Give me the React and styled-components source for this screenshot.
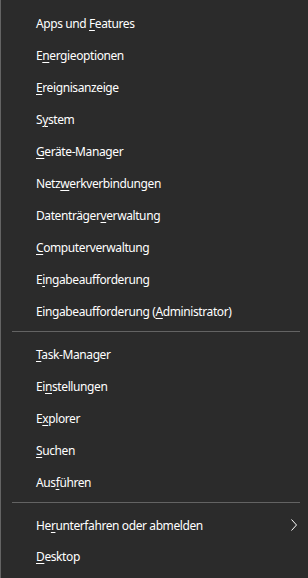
import React from 'react';
import styled, { createGlobalStyle } from 'styled-components';

const GlobalStyle = createGlobalStyle`
html, body {
  margin: 0;
  padding: 0;
  background: #2b2b2b;
}
`;

const Menu = styled.div`
width: 308px;
height: 578px;
box-sizing: border-box;
padding: 8px 0 5px 0;
background: #2b2b2b;
border-left: 1px solid #646464;
font-family: "Noto Sans", "Open Sans", sans-serif;
font-size: 12px;
letter-spacing: -0.4px;
color: #ffffff;
display: flex;
flex-direction: column;
`;

const Item = styled.div`
height: 32px;
display: flex;
align-items: center;
justify-content: space-between;
padding-left: 35px;
padding-right: 11px;
cursor: default;
`;

const Key = styled.span`
text-decoration: underline;
text-underline-offset: 2px;
text-decoration-thickness: 1px;
`;

const Separator = styled.div`
height: 1px;
margin: 4px 8px 6px 11px;
background: #636363;
`;

const Chevron = () => (
  <svg width="6" height="12" viewBox="0 0 6 12">
    <polyline points="0.5,0.5 5.5,6 0.5,11.5" fill="none" stroke="#ffffff" strokeWidth="1" />
  </svg>
);

const Label = ({ text, k }) => (
  <span>
    {text.slice(0, k)}
    <Key>{text[k]}</Key>
    {text.slice(k + 1)}
  </span>
);

const groups = [
  [
    ['Apps und Features', 9],
    ['Energieoptionen', 1],
    ['Ereignisanzeige', 0],
    ['System', 1],
    ['Geräte-Manager', 0],
    ['Netzwerkverbindungen', 4],
    ['Datenträgerverwaltung', 11],
    ['Computerverwaltung', 0],
    ['Eingabeaufforderung', 1],
    ['Eingabeaufforderung (Administrator)', 21],
  ],
  [
    ['Task-Manager', 0],
    ['Einstellungen', 2],
    ['Explorer', 1],
    ['Suchen', 0],
    ['Ausführen', 3],
  ],
  [
    ['Herunterfahren oder abmelden', 2, true],
    ['Desktop', 0],
  ],
];

const App = () => (
  <>
    <GlobalStyle />
    <Menu>
      {groups.map((items, g) => (
        <React.Fragment key={g}>
          {g > 0 && <Separator />}
          {items.map(([text, k, sub]) => (
            <Item key={text}>
              <Label text={text} k={k} />
              {sub && <Chevron />}
            </Item>
          ))}
        </React.Fragment>
      ))}
    </Menu>
  </>
);

export default App;
